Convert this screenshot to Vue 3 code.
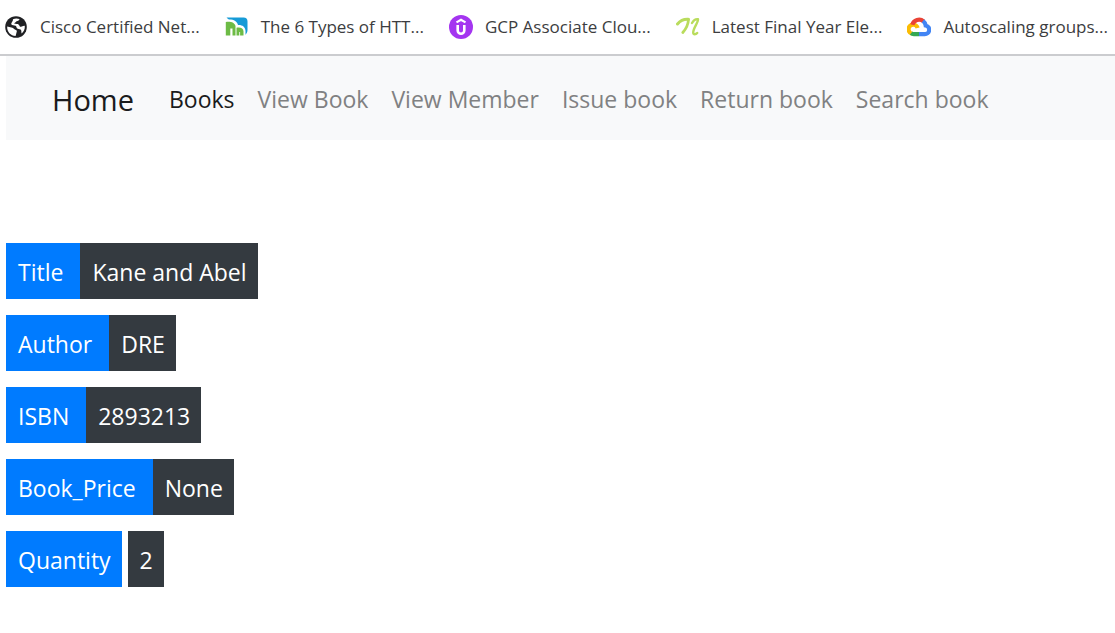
<script setup>
const bookmarks = [
  { icon: 'globe', label: 'Cisco Certified Net...' },
  { icon: 'bars', label: 'The 6 Types of HTT...' },
  { icon: 'udemy', label: 'GCP Associate Clou...' },
  { icon: 'script', label: 'Latest Final Year Ele...' },
  { icon: 'cloud', label: 'Autoscaling groups...' },
]
const links = ['Books', 'View Book', 'View Member', 'Issue book', 'Return book', 'Search book']
const details = [
  { name: 'Title', value: 'Kane and Abel' },
  { name: 'Author', value: 'DRE' },
  { name: 'ISBN', value: '2893213' },
  { name: 'Book_Price', value: 'None' },
  { name: 'Quantity', value: '2', split: true },
]
</script>

<template>
  <div class="page">
    <header class="bookmarks">
      <a v-for="b in bookmarks" :key="b.icon" href="#" class="bookmark">
        <svg v-if="b.icon === 'globe'" class="icon" viewBox="0 0 24 24" aria-hidden="true">
          <circle cx="12" cy="12" r="10.8" fill="#202124" />
          <path d="M3.2 11.6 8.4 12.8c1.5.4 1.4 1.5 3 2 1.7.5 1.6 1.3 1.2 2.5l-1 3.7C6.7 21 2.800 17 3.200 11.600zM9 4.200c2-.9 4.500-1 6.500-.1-.2 1.600-1.500 2-3 2.100-.8 1.300-2 1.300-2.200 2.600 1.800.3 3.400-.2 4.500.9 1 1 .8 2.200 2.200 2.100 1.300-.1 2-1.300 3.800-.9.300 3-1.100 5.900-3.200 7.500-.5-1.500.2-3-1-3.900-1.200-.8-2.600-.2-3.600-1.300-.8-1-.4-2-1.400-2.500-1.500-.6-3.600.2-4.300-1.400C6.700 7.900 9.300 6.300 9 4.200z" fill="#fff" />
        </svg>
        <svg v-else-if="b.icon === 'bars'" class="icon" viewBox="0 0 24 24" aria-hidden="true">
          <path d="M1.500 2.500H18.500a4 4 0 0 1 4 4V15a6 6 0 0 1-3 5.200z" fill="#169bd7" />
          <path d="M0 5c7-1.500 12 .5 13 5 4-.3 7.500 1.800 7.500 6v5H0z" fill="#fff" />
          <path d="M.8 7c4-1 9 .2 9.700 4V20.500H7.500V13.500H5.300v7H.8zM11.500 12.800c4-.8 7 .6 7 3.700v4h-3.400v-3.500h-.8v3.500h-2.800z" fill="#6dbb45" />
        </svg>
        <svg v-else-if="b.icon === 'udemy'" class="icon" viewBox="0 0 24 24" aria-hidden="true">
          <circle cx="12" cy="12" r="12" fill="#a435f0" />
          <path d="M7.500 7.400 12 4.800l4.500 2.600" fill="none" stroke="#fff" stroke-width="2.200" />
          <path d="M8.700 10v5.500a3.300 3.300 0 0 0 6.600 0V10" fill="none" stroke="#fff" stroke-width="2.600" />
        </svg>
        <svg v-else-if="b.icon === 'script'" class="icon" viewBox="0 0 24 24" aria-hidden="true">
          <g fill="none" stroke="#b9dc5c" stroke-linecap="round" stroke-linejoin="round">
            <path d="M1.500 9C4 6 8 4 12.300 4.300" stroke-width="3" />
            <path d="M12.500 4.500C12.200 9 10 14 6.800 17.500" stroke-width="2.800" />
            <path d="M16 8C17.500 5.500 20 3.800 22 4.200c.8 2.500-4.800 8.700-4.800 13.200 0 2.600 2.800 2 4 .5" stroke-width="2.400" />
          </g>
        </svg>
        <svg v-else class="icon" viewBox="0 0 24 24" aria-hidden="true">
          <g fill="none" stroke-width="4.200">
            <path d="M5 18.700A4.600 4.600 0 1 1 10.600 13" stroke="#fbbc04" />
            <path d="M5.300 9.800A7 7 0 0 1 16.600 6.300" stroke="#ea4335" />
            <path d="M16 5.800A7 7 0 0 1 18.700 10.500 4.400 4.400 0 0 1 17.500 19.200H12" stroke="#4285f4" />
            <path d="M12 19.200H6.800a4.400 4.400 0 0 1-2.700-1" stroke="#34a853" />
          </g>
        </svg>
        <span class="label">{{ b.label }}</span>
      </a>
    </header>

    <nav class="navbar">
      <a href="#" class="brand">Home</a>
      <a v-for="(l, i) in links" :key="l" href="#" class="link" :class="{ active: i === 0 }">{{ l }}</a>
    </nav>

    <main class="details">
      <dl v-for="d in details" :key="d.name" class="row" :class="{ split: d.split }">
        <dt>{{ d.name }}</dt>
        <dd>{{ d.value }}</dd>
      </dl>
    </main>
  </div>
</template>

<style>
body {
  margin: 0;
  background: #fff;
}
</style>

<style scoped>
.page {
  font-family: "Open Sans", "Noto Sans", sans-serif;
  color: #212529;
  overflow-x: hidden;
}
.bookmarks {
  display: flex;
  align-items: center;
  gap: 25px;
  height: 54px;
  padding-left: 4px;
  border-bottom: 2px solid #cbcccf;
  white-space: nowrap;
}
.bookmark {
  display: flex;
  align-items: center;
  flex: none;
  gap: 12px;
  color: #3c3d40;
  font-size: 17px;
  text-decoration: none;
}
.label {
  padding-bottom: 2px;
}
.icon {
  width: 24px;
  height: 24px;
  flex: none;
}
.navbar {
  box-sizing: border-box;
  display: flex;
  align-items: center;
  gap: 23px;
  height: 84px;
  margin-left: 6px;
  padding: 2px 0 0 46px;
  background: #f8f9fa;
  white-space: nowrap;
}
.brand {
  margin-right: 12px;
  color: #1a1b1c;
  font-size: 29px;
  text-decoration: none;
}
.link {
  color: #808182;
  font-size: 23px;
  text-decoration: none;
}
.link.active {
  color: #1a1b1c;
}
.details {
  display: flex;
  flex-direction: column;
  align-items: flex-start;
  gap: 16px;
  padding: 103px 6px 46px;
}
.row {
  display: flex;
  margin: 0;
  color: #fff;
  font-size: 23px;
  line-height: 36px;
}
.row dt {
  padding: 11px 17px 9px 12px;
  background: #007bff;
}
.row dd {
  margin: 0;
  padding: 11px 11px 9px 12px;
  background: #343a40;
}
.row.split {
  gap: 6px;
}
.row.split dt {
  padding-right: 11px;
}
</style>
